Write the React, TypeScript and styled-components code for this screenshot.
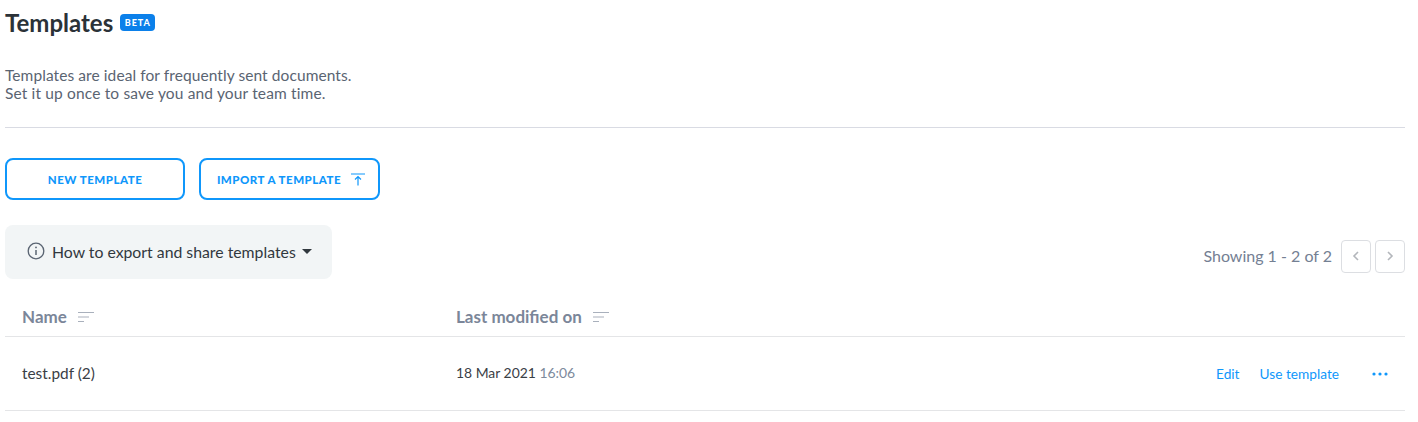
import React from 'react';
import styled, { createGlobalStyle } from 'styled-components';

const GlobalStyle = createGlobalStyle`
  html, body {
    margin: 0;
    padding: 0;
    background: #fff;
    font-family: "Lato", "Liberation Sans", sans-serif;
  }
`;

const Page = styled.div`
  width: 1400px;
  height: 422px;
  padding-left: 5px;
  overflow: hidden;
`;

const TitleRow = styled.div`
  display: flex;
  align-items: center;
  height: 22px;
  padding-top: 12px;
  gap: 7px;
`;

const Title = styled.h1`
  margin: 0;
  font-size: 24px;
  line-height: 22px;
  font-weight: 700;
  color: #2b3238;
`;

const Badge = styled.span`
  display: inline-flex;
  align-items: center;
  justify-content: center;
  width: 35px;
  height: 17px;
  margin-top: -2px;
  border-radius: 4px;
  background: #0b80ea;
  color: #fff;
  font-size: 9px;
  font-weight: 900;
  letter-spacing: 0.9px;
`;

const Description = styled.p`
  margin: 32px 0 0;
  font-size: 15.5px;
  line-height: 18px;
  color: #5a6472;
`;

const DescriptionLine = styled.span<{ $spacing: number }>`
  display: block;
  letter-spacing: ${({ $spacing }) => $spacing}px;
`;

const Divider = styled.div`
  height: 1px;
  margin-top: 25px;
  background: #d9dbe3;
`;

const Actions = styled.div`
  display: flex;
  gap: 14px;
  margin-top: 30px;
`;

const OutlineButton = styled.button<{ $width: number; $inset?: number }>`
  display: flex;
  align-items: center;
  justify-content: center;
  gap: 10px;
  box-sizing: border-box;
  width: ${({ $width }) => $width}px;
  height: 42px;
  padding: 0 0 0 ${({ $inset }) => $inset || 0}px;
  background: #fff;
  border: 2px solid #0f97fb;
  border-radius: 8px;
  color: #0f97fb;
  font-family: inherit;
  font-size: 11.5px;
  font-weight: 900;
  letter-spacing: 0.5px;
  text-transform: uppercase;
`;

const Toolbar = styled.div`
  display: flex;
  align-items: center;
  justify-content: space-between;
  margin-top: 25px;
`;

const HelpBox = styled.div`
  display: flex;
  align-items: center;
  box-sizing: border-box;
  width: 327px;
  height: 54px;
  padding-left: 22px;
  padding-bottom: 2px;
  background: #f2f5f6;
  border-radius: 8px;
  color: #31383e;
  font-size: 15.8px;
`;

const HelpLabel = styled.span`
  margin-left: 7px;
`;

const Caret = styled.span`
  width: 0;
  height: 0;
  margin-left: 6px;
  margin-top: 1px;
  border-left: 5.5px solid transparent;
  border-right: 5.5px solid transparent;
  border-top: 5px solid #31383e;
`;

const Pagination = styled.div`
  display: flex;
  align-items: center;
  margin-top: 8px;
`;

const PageInfo = styled.span`
  margin-right: 9px;
  margin-top: -2px;
  font-size: 16px;
  color: #748093;
`;

const PageButton = styled.div`
  display: flex;
  align-items: center;
  justify-content: center;
  box-sizing: border-box;
  width: 30px;
  height: 33px;
  margin-left: 4px;
  border: 1px solid #dcdee2;
  border-radius: 4px;
  &:first-of-type {
    margin-left: 0;
  }
`;

const Row = styled.div<{ $height: number }>`
  display: grid;
  grid-template-columns: 434px 1fr auto;
  align-items: center;
  height: ${({ $height }) => $height}px;
  padding-left: 17px;
  border-bottom: 1px solid #e4e5e7;
`;

const HeaderRow = styled(Row)`
  align-items: start;
  padding-top: 28px;
  box-sizing: border-box;
`;

const HeaderCell = styled.div`
  display: flex;
  align-items: center;
  gap: 10px;
  font-size: 17px;
  line-height: 20px;
  font-weight: 700;
  color: #7b8699;
`;

const NameCell = styled.div`
  font-size: 15.4px;
  color: #3a4046;
  margin-top: -2px;
`;

const DateCell = styled.div`
  font-size: 13.9px;
  color: #3a4046;
  margin-top: -2px;
`;

const Time = styled.span`
  color: #7d8a9c;
`;

const RowActions = styled.div`
  display: flex;
  align-items: center;
  margin-top: -1px;
  padding-right: 17px;
  font-size: 13.7px;
  color: #0f97fb;
`;

const ActionLink = styled.a`
  margin-right: 20px;
`;

const MoreDots = styled.svg`
  margin-left: 13px;
  margin-top: 2px;
`;

const SortIcon = () => (
  <svg width="18" height="12" viewBox="0 0 18 12" fill="none" stroke="#a9b0bc" strokeWidth="1.2">
    <path d="M1 1.5h16M1 6h11M1 10.5h6" />
  </svg>
);

const InfoIcon = () => (
  <svg width="18" height="18" viewBox="0 0 18 18" fill="none" stroke="#5a6472" strokeWidth="1.3">
    <circle cx="9" cy="9" r="7.8" />
    <path d="M9 8v5" strokeWidth="1.5" />
    <circle cx="9" cy="5.4" r="0.9" fill="#5a6472" stroke="none" />
  </svg>
);

const UploadIcon = () => (
  <svg width="14" height="13" viewBox="0 0 14 13" fill="none" stroke="#0f97fb" strokeWidth="1.2">
    <path d="M0 1h14M7 12.5V4M4 6.5L7 3.6l3 2.9" />
  </svg>
);

const Chevron = ({ d }: { d: string }) => (
  <svg width="8" height="10" viewBox="0 0 8 10" fill="none" stroke="#b3b6bb" strokeWidth="1.6">
    <path d={d} />
  </svg>
);

export default function App() {
  return (
    <Page>
      <GlobalStyle />
      <TitleRow>
        <Title>Templates</Title>
        <Badge>BETA</Badge>
      </TitleRow>
      <Description>
        <DescriptionLine $spacing={0.08}>Templates are ideal for frequently sent documents.</DescriptionLine>
        <DescriptionLine $spacing={0.15}>Set it up once to save you and your team time.</DescriptionLine>
      </Description>
      <Divider />
      <Actions>
        <OutlineButton $width={180}>New template</OutlineButton>
        <OutlineButton $width={181} $inset={3}>
          Import a template
          <UploadIcon />
        </OutlineButton>
      </Actions>
      <Toolbar>
        <HelpBox>
          <InfoIcon />
          <HelpLabel>How to export and share templates</HelpLabel>
          <Caret />
        </HelpBox>
        <Pagination>
          <PageInfo>Showing 1 - 2 of 2</PageInfo>
          <PageButton>
            <Chevron d="M6 1L2 5l4 4" />
          </PageButton>
          <PageButton>
            <Chevron d="M2 1l4 4-4 4" />
          </PageButton>
        </Pagination>
      </Toolbar>
      <HeaderRow $height={58}>
        <HeaderCell>
          Name <SortIcon />
        </HeaderCell>
        <HeaderCell>
          Last modified on <SortIcon />
        </HeaderCell>
        <div />
      </HeaderRow>
      <Row $height={73}>
        <NameCell>test.pdf (2)</NameCell>
        <DateCell>
          18 Mar 2021 <Time>16:06</Time>
        </DateCell>
        <RowActions>
          <ActionLink>Edit</ActionLink>
          <ActionLink>Use template</ActionLink>
          <MoreDots width="16" height="4" viewBox="0 0 16 4" fill="#0f97fb">
            <circle cx="2" cy="2" r="1.6" />
            <circle cx="8" cy="2" r="1.6" />
            <circle cx="14" cy="2" r="1.6" />
          </MoreDots>
        </RowActions>
      </Row>
    </Page>
  );
}
